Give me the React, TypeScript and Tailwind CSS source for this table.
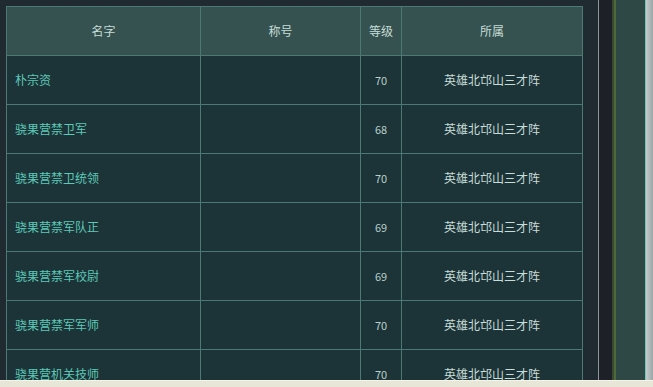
import React from 'react';

type Row = { name: string; title: string; level: number; group: string };

const rows: Row[] = [
  { name: '朴宗资', title: '', level: 70, group: '英雄北邙山三才阵' },
  { name: '骁果营禁卫军', title: '', level: 68, group: '英雄北邙山三才阵' },
  { name: '骁果营禁卫统领', title: '', level: 70, group: '英雄北邙山三才阵' },
  { name: '骁果营禁军队正', title: '', level: 69, group: '英雄北邙山三才阵' },
  { name: '骁果营禁军校尉', title: '', level: 69, group: '英雄北邙山三才阵' },
  { name: '骁果营禁军军师', title: '', level: 70, group: '英雄北邙山三才阵' },
  { name: '骁果营机关技师', title: '', level: 70, group: '英雄北邙山三才阵' },
];

const App: React.FC = () => {
  return (
    <div
      className="w-[653px] h-[387px] overflow-hidden flex flex-col bg-[#1f2b30] text-[12px]"
      style={{ fontFamily: '"Noto Sans CJK SC", "Liberation Sans", sans-serif' }}
    >
      <div className="flex h-[380px] overflow-hidden">
        {/* 表格区域 */}
        <div className="w-[598px] pt-[6px] pl-[6px]">
          <table className="border-collapse table-fixed w-[576px]">
            <colgroup>
              <col className="w-[194px]" />
              <col className="w-[160px]" />
              <col className="w-[41px]" />
              <col className="w-[181px]" />
            </colgroup>
            <thead>
              <tr className="h-[49px] bg-[#355250] text-[#c6dcd7]">
                <th className="border border-[#4b7a74] font-normal">名字</th>
                <th className="border border-[#4b7a74] font-normal">称号</th>
                <th className="border border-[#4b7a74] font-normal">等级</th>
                <th className="border border-[#4b7a74] font-normal">所属</th>
              </tr>
            </thead>
            <tbody>
              {rows.map((r, i) => (
                <tr key={i} className="h-[49px] bg-[#1c3337]">
                  <td className="border border-[#4b7a74] pl-[8px] text-[#5cc9b8]">{r.name}</td>
                  <td className="border border-[#4b7a74]">{r.title}</td>
                  <td className="border border-[#4b7a74] text-center text-[11px] text-[#b9d0cc]">{r.level}</td>
                  <td className="border border-[#4b7a74] text-center text-[#c6dcd7]">{r.group}</td>
                </tr>
              ))}
            </tbody>
          </table>
        </div>

        {/* 右侧边框 */}
        <div className="w-px bg-[#8b9a98]" />
        <div className="w-[13px] bg-[#1e2027]" />
        <div className="w-[2px] bg-[#3a4a30]" />
        <div className="w-[2px] bg-[#4e6a38]" />
        <div className="w-[29px] bg-[#2e4945]" />
        <div className="w-px bg-[#6fcab9]" />
        <div className="flex-1 bg-gradient-to-r from-[#c3cccc] to-[#9aa6a6]" />
      </div>
      <div className="h-px bg-[#f6f4ea]" />
      <div className="flex-1 bg-[#e8e6d6]" />
    </div>
  );
};

export default App;
